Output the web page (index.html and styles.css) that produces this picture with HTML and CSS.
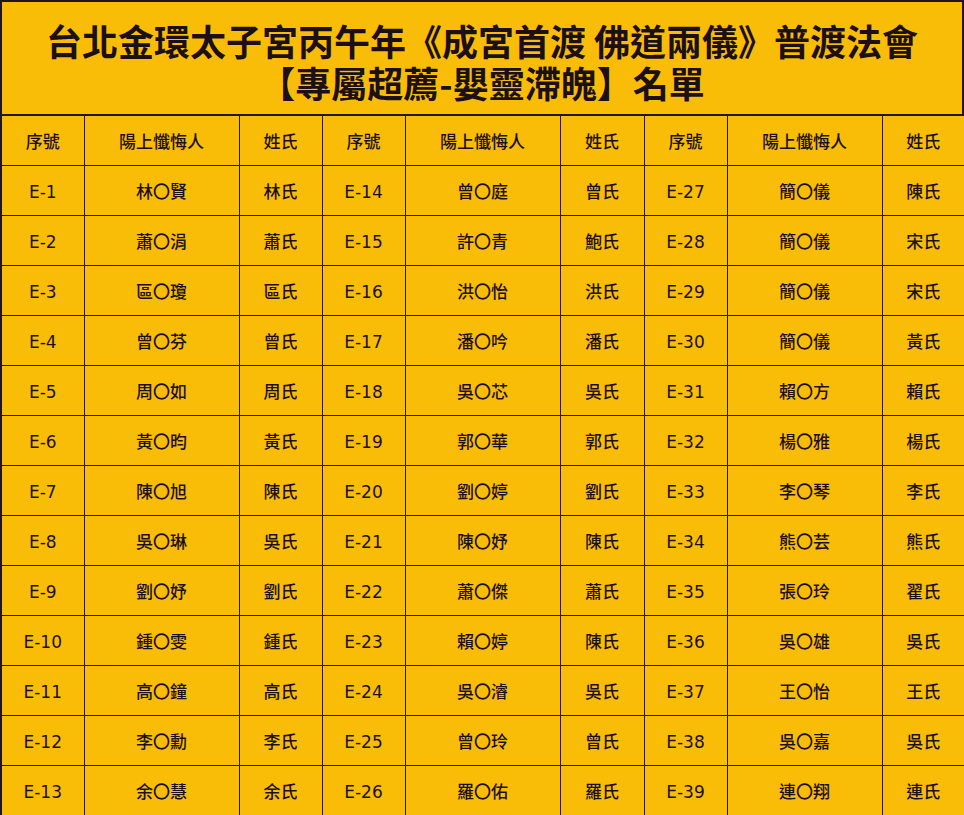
FILE: index.html
```html
<!DOCTYPE html>
<html lang="zh-Hant">
<head>
<meta charset="utf-8">
<title>普渡法會名單</title>
<link rel="stylesheet" href="styles.css">
</head>
<body>
<div class="sheet">
  <div class="title">
    <div class="line">台北金環太子宮丙午年《成宮首渡 佛道兩儀》普渡法會</div>
    <div class="line">【專屬超薦-嬰靈滯魄】名單</div>
  </div>
  <table class="list">
    <colgroup>
      <col class="c-no"><col class="c-name"><col class="c-sur">
      <col class="c-no"><col class="c-name"><col class="c-sur2">
      <col class="c-no"><col class="c-name"><col class="c-sur">
    </colgroup>
    <thead>
      <tr><th>序號</th><th>陽上懺悔人</th><th>姓氏</th><th>序號</th><th>陽上懺悔人</th><th>姓氏</th><th>序號</th><th>陽上懺悔人</th><th>姓氏</th></tr>
    </thead>
    <tbody>
      <tr><td class="num">E-1</td><td>林〇賢</td><td>林氏</td><td class="num">E-14</td><td>曾〇庭</td><td>曾氏</td><td class="num">E-27</td><td>簡〇儀</td><td>陳氏</td></tr>
      <tr><td class="num">E-2</td><td>蕭〇涓</td><td>蕭氏</td><td class="num">E-15</td><td>許〇青</td><td>鮑氏</td><td class="num">E-28</td><td>簡〇儀</td><td>宋氏</td></tr>
      <tr><td class="num">E-3</td><td>區〇瓊</td><td>區氏</td><td class="num">E-16</td><td>洪〇怡</td><td>洪氏</td><td class="num">E-29</td><td>簡〇儀</td><td>宋氏</td></tr>
      <tr><td class="num">E-4</td><td>曾〇芬</td><td>曾氏</td><td class="num">E-17</td><td>潘〇吟</td><td>潘氏</td><td class="num">E-30</td><td>簡〇儀</td><td>黃氏</td></tr>
      <tr><td class="num">E-5</td><td>周〇如</td><td>周氏</td><td class="num">E-18</td><td>吳〇芯</td><td>吳氏</td><td class="num">E-31</td><td>賴〇方</td><td>賴氏</td></tr>
      <tr><td class="num">E-6</td><td>黃〇昀</td><td>黃氏</td><td class="num">E-19</td><td>郭〇華</td><td>郭氏</td><td class="num">E-32</td><td>楊〇雅</td><td>楊氏</td></tr>
      <tr><td class="num">E-7</td><td>陳〇旭</td><td>陳氏</td><td class="num">E-20</td><td>劉〇婷</td><td>劉氏</td><td class="num">E-33</td><td>李〇琴</td><td>李氏</td></tr>
      <tr><td class="num">E-8</td><td>吳〇琳</td><td>吳氏</td><td class="num">E-21</td><td>陳〇妤</td><td>陳氏</td><td class="num">E-34</td><td>熊〇芸</td><td>熊氏</td></tr>
      <tr><td class="num">E-9</td><td>劉〇妤</td><td>劉氏</td><td class="num">E-22</td><td>蕭〇傑</td><td>蕭氏</td><td class="num">E-35</td><td>張〇玲</td><td>翟氏</td></tr>
      <tr><td class="num">E-10</td><td>鍾〇雯</td><td>鍾氏</td><td class="num">E-23</td><td>賴〇婷</td><td>陳氏</td><td class="num">E-36</td><td>吳〇雄</td><td>吳氏</td></tr>
      <tr><td class="num">E-11</td><td>高〇鐘</td><td>高氏</td><td class="num">E-24</td><td>吳〇濬</td><td>吳氏</td><td class="num">E-37</td><td>王〇怡</td><td>王氏</td></tr>
      <tr><td class="num">E-12</td><td>李〇勳</td><td>李氏</td><td class="num">E-25</td><td>曾〇玲</td><td>曾氏</td><td class="num">E-38</td><td>吳〇嘉</td><td>吳氏</td></tr>
      <tr><td class="num">E-13</td><td>余〇慧</td><td>余氏</td><td class="num">E-26</td><td>羅〇佑</td><td>羅氏</td><td class="num">E-39</td><td>連〇翔</td><td>連氏</td></tr>
    </tbody>
  </table>
</div>
</body>
</html>
```

FILE: styles.css
```css
html, body {
  margin: 0;
  padding: 0;
  background: #fabd07;
}

.sheet {
  width: 964px;
  height: 815px;
  box-sizing: border-box;
  background: #fabd07;
  color: #1c1016;
  font-family: "Noto Sans CJK TC", "Noto Sans CJK SC", sans-serif;
  overflow: hidden;
}

.title {
  box-sizing: border-box;
  height: 114px;
  padding-top: 17px;
  border: 2px solid #24141e;
  border-bottom: none;
  text-align: center;
  font-weight: 700;
  font-size: 36px;
}

.title .line {
  height: 42px;
  line-height: 42px;
}

.list {
  width: 964px;
  table-layout: fixed;
  border-collapse: collapse;
}

.c-no { width: 83px; }
.c-name { width: 155px; }
.c-sur { width: 83px; }
.c-sur2 { width: 84px; }

.list th,
.list td {
  height: 49px;
  padding: 0;
  border: 1px solid #24141e;
  text-align: center;
  vertical-align: middle;
  font-size: 17px;
  font-weight: 500;
  line-height: 20px;
  white-space: nowrap;
}

.list tr > :first-child { border-left-width: 2px; }
.list tr > :last-child { border-right-width: 2px; }
.list thead th { border-top-width: 2px; }
.list tbody tr:last-child td { border-bottom-width: 2px; }

.list td.num {
  font-family: "DejaVu Sans", sans-serif;
  font-weight: 400;
  font-size: 17px;
  height: 47px;
  padding-top: 2px;
}
```
